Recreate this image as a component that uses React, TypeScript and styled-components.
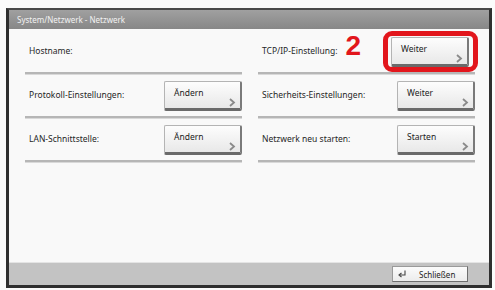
import React from "react";
import styled, { createGlobalStyle } from "styled-components";

const GlobalStyle = createGlobalStyle`
  html, body {
    margin: 0;
    padding: 0;
    background: #fbfbfb;
  }
  body {
    font-family: "Noto Sans", "DejaVu Sans", sans-serif;
  }
`;

type Setting = {
  label: string;
  action: string;
  highlight?: boolean;
};

const leftColumn: Setting[] = [
  { label: "Hostname:", action: "" },
  { label: "Protokoll-Einstellungen:", action: "Ändern" },
  { label: "LAN-Schnittstelle:", action: "Ändern" },
];

const rightColumn: Setting[] = [
  { label: "TCP/IP-Einstellung:", action: "Weiter", highlight: true },
  { label: "Sicherheits-Einstellungen:", action: "Weiter" },
  { label: "Netzwerk neu starten:", action: "Starten" },
];

const Chevron = () => (
  <svg width="8" height="9" viewBox="0 0 8 9">
    <path d="M2 1 L6 4.5 L2 8" fill="none" stroke="#8a8a8a" strokeWidth="1.8" />
  </svg>
);

const ReturnIcon = () => (
  <svg width="9" height="8" viewBox="0 0 9 8">
    <path d="M7 0.5 V5 H2" fill="none" stroke="#444" strokeWidth="1.1" />
    <path d="M3.5 3 L1 5 L3.5 7" fill="none" stroke="#444" strokeWidth="1.1" />
  </svg>
);

const SettingRow = ({ label, action, highlight }: Setting) => (
  <Row>
    <LabelGroup>
      <Label>{label}</Label>
      {highlight && <StepNumber>2</StepNumber>}
    </LabelGroup>
    {action ? (
      <ActionButton highlight={highlight}>
        <ButtonText>{action}</ButtonText>
        <ChevronWrap>
          <Chevron />
        </ChevronWrap>
      </ActionButton>
    ) : (
      <Spacer />
    )}
  </Row>
);

export default function App() {
  return (
    <>
      <GlobalStyle />
      <Page>
        <Frame>
          <TitleBar>System/Netzwerk - Netzwerk</TitleBar>
          <Content>
            <Column>
              {leftColumn.map((s) => (
                <SettingRow key={s.label} {...s} />
              ))}
            </Column>
            <Column>
              {rightColumn.map((s) => (
                <SettingRow key={s.label} {...s} />
              ))}
            </Column>
          </Content>
          <Footer>
            <CloseButton>
              <ReturnIcon />
              <CloseText>Schließen</CloseText>
            </CloseButton>
          </Footer>
        </Frame>
      </Page>
    </>
  );
}

const Page = styled.div`
  width: 495px;
  height: 290px;
  box-sizing: border-box;
  padding: 8px 3px 2px 6px;
`;

const Frame = styled.div`
  height: 280px;
  box-sizing: border-box;
  display: flex;
  flex-direction: column;
  border: 3px solid #2f2f2f;
  border-top: 2px solid #4a4a4a;
  background: #f9f9f9;
`;

const TitleBar = styled.div`
  height: 19px;
  line-height: 19px;
  padding-left: 8px;
  font-size: 8px;
  color: #f2f2f2;
  background: linear-gradient(#a0a0a0, #878787);
`;

const Content = styled.div`
  flex: 1;
  display: grid;
  grid-template-columns: 217px 217px;
  column-gap: 16px;
  align-content: start;
  padding: 1px 14px 0 16px;
`;

const Column = styled.div`
  display: flex;
  flex-direction: column;
`;

const Row = styled.div`
  height: 44px;
  box-sizing: border-box;
  display: flex;
  justify-content: space-between;
  align-items: flex-start;
  padding-top: 7px;
  border-bottom: 2px solid #b6b6b6;
  box-shadow: 0 1px 0 #d9d9d9;
`;

const LabelGroup = styled.div`
  display: flex;
  align-items: flex-start;
`;

const Label = styled.span`
  margin-top: 8px;
  padding-left: 4px;
  font-size: 8.5px;
  line-height: 11px;
  color: #262626;
`;

const StepNumber = styled.span`
  margin: -5px 0 0 8px;
  font-family: "Liberation Sans", Arial, sans-serif;
  font-weight: 700;
  font-size: 28px;
  line-height: 28px;
  color: #e2161c;
`;

const ActionButton = styled.div<{ highlight?: boolean }>`
  position: relative;
  width: 78px;
  height: 30px;
  box-sizing: border-box;
  display: flex;
  flex-direction: column;
  justify-content: space-between;
  padding: 5px 4px 2px 9px;
  margin-right: ${({ highlight }) => (highlight ? 6 : 0)}px;
  background: linear-gradient(#fdfdfd, #e8e8e8);
  border: 1px solid #b4b4b4;
  border-right: 2px solid #7a7a7a;
  border-bottom: 3px solid #6a6a6a;
  border-radius: 2px;

  &::after {
    content: "";
    display: ${({ highlight }) => (highlight ? "block" : "none")};
    position: absolute;
    top: -7px;
    bottom: -8px;
    left: -9px;
    right: -11px;
    border: 5px solid #e2161c;
    border-radius: 9px;
  }
`;

const ButtonText = styled.span`
  font-size: 8.5px;
  line-height: 11px;
  color: #222;
`;

const ChevronWrap = styled.span`
  align-self: flex-end;
  display: flex;
`;

const Spacer = styled.div`
  height: 30px;
`;

const Footer = styled.div`
  height: 22px;
  display: flex;
  align-items: center;
  justify-content: flex-end;
  padding-right: 21px;
  background: #c3c3c3;
  border-top: 1px solid #e4e4e4;
`;

const CloseButton = styled.div`
  width: 76px;
  height: 16px;
  box-sizing: border-box;
  display: flex;
  align-items: center;
  padding-left: 5px;
  gap: 12px;
  background: linear-gradient(#fbfbfb, #ececec);
  border: 1px solid #9a9a9a;
  border-right-color: #6e6e6e;
  border-bottom-color: #6e6e6e;
`;

const CloseText = styled.span`
  font-size: 8px;
  color: #222;
`;
